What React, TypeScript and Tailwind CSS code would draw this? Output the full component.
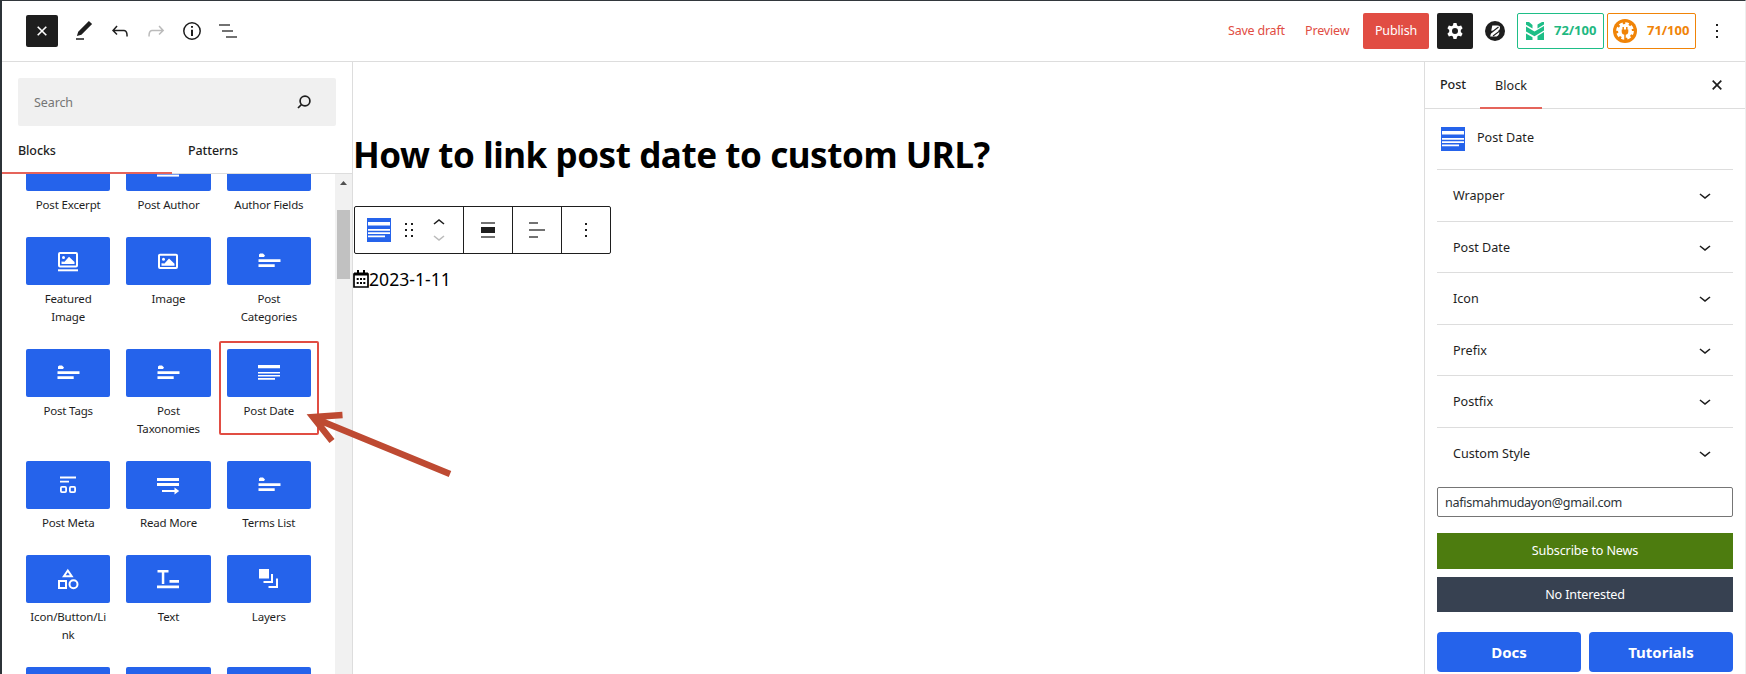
import React from "react";

const PostIcon = ({ size = 24 }: { size?: number }) => (
  <svg width={size} height={size} viewBox="0 0 24 24" className="shrink-0">
    <rect width="24" height="24" fill="#2563eb" />
    <path d="M1 4h22v3.5H1zM1 11h22v1.7H1zM1 14.3h22V16H1zM1 17.5h17v1.7H1z" fill="#fff" />
  </svg>
);

const tileIcons: Record<string, React.ReactNode> = {
  none: null,
  author: <path d="M1 20.6h22" stroke="#fff" strokeWidth="2" />,
  featured: (
    <g fill="none" stroke="#fff">
      <rect x="3" y="4" width="18" height="13.5" rx="1" strokeWidth="2" />
      <path d="M2 21.3h20" strokeWidth="2" />
      <path d="M5.5 15V12.5l3 .3 4.5-5 5.5 5.2v2z" fill="#fff" stroke="none" />
      <circle cx="7.5" cy="8.5" r="1.5" fill="#fff" stroke="none" />
    </g>
  ),
  image: (
    <g fill="none" stroke="#fff">
      <rect x="3" y="5.7" width="18" height="13.3" rx="1" strokeWidth="2" />
      <path d="M5.5 16.7v-2.5l3 .3 4.5-5 5.5 5.2v2z" fill="#fff" stroke="none" />
      <circle cx="7.5" cy="10.2" r="1.5" fill="#fff" stroke="none" />
    </g>
  ),
  terms: <path d="M2 8V5.600L3.200 4.500h2.800l2 2-1 1.500zM1.500 10.300h22v2.800h-22zM1.500 15.300h16.200v2.800H1.500z" fill="#fff" />,
  date: <path d="M1 4h22v3.300H1zM1 11h22v1.600H1zM1 14h22v1.600H1zM1 17h17v1.800H1z" fill="#fff" />,
  meta: (
    <g fill="none" stroke="#fff" strokeWidth="1.8">
      <path d="M4 4.500h16M4 8.700h9" />
      <rect x="4.900" y="13.900" width="5.200" height="5.200" rx="1" />
      <rect x="13.900" y="13.900" width="5.200" height="5.200" rx="1" />
    </g>
  ),
  more: (
    <g fill="#fff">
      <path d="M1 5h22v3H1zM1 10h22v3H1zM6 17h13v2H6z" />
      <path d="M18.500 14.500l4.700 3.500-4.700 3.500z" />
    </g>
  ),
  shapes: (
    <g fill="none" stroke="#fff" strokeWidth="2">
      <path d="M11.800 3.500L7.900 9.200h7.800z" />
      <rect x="3" y="14" width="7" height="7" />
      <circle cx="17.500" cy="17.300" r="4" />
    </g>
  ),
  text: <path d="M1.500 3h11v2.400H8.300V17H5.800V5.400H1.500zM13.500 13H23v2.700h-9.500zM1 18.500h22v2.800H1z" fill="#fff" />,
  layers: <path d="M2 2h10v9.500H2zM14 7h2v9H6.500v-2H14zM19 11.500h2V21h-9.500v-2H19z" fill="#fff" />,
};

const rows: { h: string; items: [string, string][] }[] = [
  { h: "h-[94px]", items: [["Post Excerpt", "none"], ["Post Author", "author"], ["Author Fields", "none"]] },
  { h: "h-[112px]", items: [["Featured Image", "featured"], ["Image", "image"], ["Post Categories", "terms"]] },
  { h: "h-[112px]", items: [["Post Tags", "terms"], ["Post Taxonomies", "terms"], ["Post Date", "date"]] },
  { h: "h-[94px]", items: [["Post Meta", "meta"], ["Read More", "more"], ["Terms List", "terms"]] },
  { h: "h-[112px]", items: [["Icon/Button/Link", "shapes"], ["Text", "text"], ["Layers", "layers"]] },
  { h: "h-[94px]", items: [["", "none"], ["", "none"], ["", "none"]] },
];

function Tile({ label, icon }: { label: string; icon: string }) {
  const active = label === "Post Date";
  return (
    <div
      className={
        "flex h-full flex-col items-center px-2 pt-2 " +
        (active ? "max-h-[94px] rounded-xs outline-2 -outline-offset-2 outline-[#e14d43]" : "")
      }
    >
      <div className="flex h-12 w-full shrink-0 items-center justify-center rounded-xs bg-[#2563eb]">
        <svg width="24" height="24" viewBox="0 0 24 24">{tileIcons[icon]}</svg>
      </div>
      <div className="mt-[5px] w-[77px] text-center text-[11.5px] leading-[18px] tracking-[-0.17px] break-words text-[#1e1e1e]">
        {label}
      </div>
    </div>
  );
}

function Inserter() {
  return (
    <aside className="flex w-[351px] shrink-0 flex-col border-r border-[#ddd]">
      <div className="mx-4 mt-4 flex h-12 shrink-0 items-center justify-between rounded-xs bg-[#f0f0f0] pr-5 pl-4 text-[#757575]">
        <span className="pt-[3px] text-[12.5px] tracking-[-0.1px]">Search</span>
        <svg width="24" height="24" viewBox="0 0 24 24" fill="none" stroke="#1e1e1e" strokeWidth="1.7">
          <circle cx="13" cy="11" r="4.900" />
          <path d="M9.500 14.500L6 18" />
        </svg>
      </div>
      <div className="flex h-12 shrink-0 border-b border-[#ddd] text-[12.5px] tracking-[-0.1px] text-[#1e1e1e]">
        <div className="-mb-px flex w-[170px] items-center border-b-2 border-[#e5645b] pt-[4px] pl-4 font-medium">Blocks</div>
        <div className="flex items-center pt-[3px] pl-4 font-medium">Patterns</div>
      </div>
      <div className="flex min-h-0 flex-1">
        <div className="flex min-w-0 flex-1 flex-col overflow-hidden">
          <div className="-mt-[39px] ml-4 w-[301px]">
            {rows.map((row, i) => (
              <div key={i} className={"grid grid-cols-3 " + row.h}>
                {row.items.map(([label, icon], j) => (
                  <Tile key={j} label={label} icon={icon} />
                ))}
              </div>
            ))}
          </div>
        </div>
        <div className="flex w-[17px] flex-col items-center bg-[#f1f1f1]">
          <svg width="17" height="17" viewBox="0 0 17 17" className="shrink-0">
            <path d="M5 11h7L8.500 7z" fill="#505050" />
          </svg>
          <div className="mt-[19px] h-[69px] w-[13px] bg-[#c1c1c1]" />
        </div>
      </div>
    </aside>
  );
}

function Header() {
  return (
    <header className="flex h-[61px] shrink-0 items-center border-b border-[#ddd]">
      <div className="ml-6 flex size-8 items-center justify-center rounded-xs bg-[#1e1e1e]">
        <svg width="24" height="24" viewBox="0 0 24 24" stroke="#fff" strokeWidth="1.6">
          <path d="M7.700 7.700l8.600 8.600M16.300 7.700l-8.600 8.600" />
        </svg>
      </div>
      <div className="ml-[14px] flex gap-3 text-[#1e1e1e]">
        <svg width="24" height="24" viewBox="0 0 24 24" fill="currentColor">
          <path d="M20.100 5.100L16.900 2 6.200 12.700l-1.300 4.400 4.500-1.300L20.100 5.100zM4 20.800h8v-1.500H4v1.500z" />
        </svg>
        <svg width="24" height="24" viewBox="0 0 24 24" fill="currentColor">
          <path d="M18.300 11.700c-.6-.6-1.400-.9-2.300-.9H6.700l2.900-3.300-1.100-1-4.500 5L8.500 16l1-1-2.700-2.700H16c.5 0 .9.200 1.300.5 1 1 1 3.400 1 4.500v.3h1.500v-.2c0-1.500 0-4.300-1.500-5.700z" />
        </svg>
        <svg width="24" height="24" viewBox="0 0 24 24" fill="#bbb">
          <path d="M15.600 6.500l-1.100 1 2.900 3.300H8c-.9 0-1.700.3-2.300.9-1.400 1.500-1.400 4.200-1.400 5.600v.2h1.500v-.3c0-1.100 0-3.500 1-4.500.3-.3.7-.5 1.300-.5h9.200L14.500 15l1.100 1.100 4.600-4.600-4.600-5z" />
        </svg>
        <svg width="24" height="24" viewBox="0 0 24 24" fill="none" stroke="currentColor" strokeWidth="1.5">
          <circle cx="12" cy="12" r="8.200" />
          <path d="M12 10.700V17M12 7v1.800" strokeWidth="2" />
        </svg>
        <svg width="24" height="24" viewBox="0 0 24 24" stroke="#444" strokeWidth="1.7">
          <path d="M3 6h11M6 12h11M10 18h11" />
        </svg>
      </div>
      <div className="ml-auto flex items-center text-[12.5px] text-[#e14d43]">
        <span className="w-[77px] pt-px tracking-[-0.22px]">Save draft</span>
        <span className="w-[58px] pt-px tracking-[-0.15px]">Preview</span>
        <div className="flex h-9 w-[66px] items-center justify-center rounded-xs bg-[#e14d43] pt-px tracking-[-0.15px] text-white">
          Publish
        </div>
        <div className="ml-2 flex size-9 items-center justify-center rounded-xs bg-[#1e1e1e]">
          <svg width="24" height="24" viewBox="0 0 24 24" fill="#fff" fillRule="evenodd">
            <path d="M10.500 4h3l.6 2.400 1.600.9 2.400-.7 1.500 2.600-1.800 1.700v2.200l1.800 1.700-1.500 2.600-2.400-.7-1.600.9-.6 2.400h-3l-.6-2.400-1.600-.9-2.400.7-1.500-2.600 1.800-1.700v-2.200L4.400 9.200l1.500-2.600 2.400.7 1.600-.9zM12 9a3 3 0 100 6 3 3 0 000-6z" />
          </svg>
        </div>
        <svg width="20" height="20" viewBox="0 0 20 20" className="ml-3">
          <circle cx="10" cy="10" r="10" fill="#1e1e1e" />
          <path
            d="M7.300 4.500h5c2.200 0 3.100 1.300 2.600 2.900-.3 1.100-.9 1.800-1.900 2.300 1.100.5 1.500 1.400 1.200 2.700-.5 2-1.900 3.100-4 3.100H5.200l.9-4 2-1.700H6.200z"
            fill="#fff"
          />
          <path d="M4.500 13l9-7M8 15l7-5.200" stroke="#1e1e1e" strokeWidth="1.100" />
        </svg>
        <div className="ml-3 flex h-9 w-[87px] items-center rounded-xs border border-[#1ebe87] pl-2 text-[13px] font-bold text-[#1fb881]">
          <svg width="18" height="18" viewBox="0 0 18 18" fill="#1ebe87">
            <path d="M0 0h3l3.500 3v3.500L0 2.800zM11.500 2.500L16 0h2v2.500l-6.500 4zM0 4.500l8.500 5L18 4v4.500l-9.500 5.800L0 9.500zM0 11.500l6.500 3.700V18H0zM11.500 14l6.500-4v8h-6.500z" />
          </svg>
          <span className="ml-[10px] tracking-[-0.05px]">72/100</span>
        </div>
        <div className="ml-[3px] flex h-9 w-[89px] items-center rounded-xs border border-[#f08408] pl-[5px] text-[13px] font-bold text-[#f08408]">
          <svg width="24" height="24" viewBox="0 0 24 24">
            <circle cx="12" cy="12" r="12" fill="#f08408" />
            <circle cx="12" cy="12" r="7" fill="#fff" />
            <circle cx="12" cy="12" r="7.600" fill="none" stroke="#fff" strokeWidth="2.500" strokeDasharray="3.600 2.370" />
            <path d="M10.200 8v3M13.800 8v3M12 14v8" stroke="#f08408" strokeWidth="1.500" />
            <path d="M8.700 10.500h6.600v2a3.300 3.300 0 01-6.600 0z" fill="#f08408" />
          </svg>
          <span className="ml-[10px] tracking-[-0.05px]">71/100</span>
        </div>
        <svg width="24" height="24" viewBox="0 0 24 24" className="mr-4 ml-[9px]" fill="#1e1e1e">
          <path d="M11 5h2v2h-2zM11 11h2v2h-2zM11 17h2v2h-2z" />
        </svg>
      </div>
    </header>
  );
}

function Editor() {
  return (
    <main className="flex min-w-0 flex-1 flex-col text-black">
      <h1 className="mt-[68px] h-[50px] text-[35px] leading-[50px] font-bold tracking-[-0.43px] whitespace-nowrap">
        How to link post date to custom URL?
      </h1>
      <div className="mt-[26px] ml-px flex h-12 w-[257px] shrink-0 divide-x divide-[#1e1e1e] rounded-xs border border-[#1e1e1e]">
        <div className="flex w-[109px] items-center pl-3">
          <PostIcon />
          <svg width="12" height="16" viewBox="0 0 12 16" className="ml-[13px]" fill="#1e1e1e">
            <path d="M1 1h2v2H1zM7 1h2v2H7zM1 7h2v2H1zM7 7h2v2H7zM1 13h2v2H1zM7 13h2v2H7z" />
          </svg>
          <svg width="12" height="24" viewBox="0 0 12 24" className="ml-[17px]" fill="none" strokeWidth="1.6">
            <path d="M1 6l5-4 5 4" stroke="#1e1e1e" />
            <path d="M1 18l5 4 5-4" stroke="#bbb" />
          </svg>
        </div>
        <div className="flex w-[49px] items-center justify-center">
          <svg width="24" height="24" viewBox="0 0 24 24">
            <path d="M5 5h14M5 19h14" stroke="#444" strokeWidth="1.7" />
            <path d="M5 9h14v6H5z" fill="#1e1e1e" />
          </svg>
        </div>
        <div className="flex w-[49px] items-center justify-center">
          <svg width="24" height="24" viewBox="0 0 24 24" stroke="#444" strokeWidth="1.7">
            <path d="M4 5h9M4 12h16M4 19h9" />
          </svg>
        </div>
        <div className="flex flex-1 items-center justify-center">
          <svg width="24" height="24" viewBox="0 0 24 24" fill="#1e1e1e">
            <path d="M11 5h2v2h-2zM11 11h2v2h-2zM11 17h2v2h-2z" />
          </svg>
        </div>
      </div>
      <div className="mt-[11px] flex h-[28px] items-center text-[17.6px]">
        <svg width="16" height="18" viewBox="0 0 16 18">
          <path d="M1 4h14v13H1z" fill="none" stroke="#000" strokeWidth="1.7" />
          <path d="M1 2.500h14v3H1zM4 0h2v4H4zM10 0h2v4h-2z" />
          <path d="M3.700 8h2v2h-2zM7 8h2v2H7zM10.300 8h2v2h-2zM3.700 12h2v2h-2zM7 12h2v2H7zM10.300 12h2v2h-2z" />
        </svg>
        <span>2023-1-11</span>
      </div>
    </main>
  );
}

const panels = ["Wrapper", "Post Date", "Icon", "Prefix", "Postfix", "Custom Style"];

function Sidebar() {
  return (
    <aside className="flex w-[321px] shrink-0 flex-col border-l border-[#ddd] text-[12.6px] text-[#1e1e1e]">
      <div className="flex h-[47px] shrink-0 items-center border-b border-[#ddd]">
        <span className="w-[55px] pt-px pl-[15px] font-medium tracking-[-0.1px]">Post</span>
        <span className="-mb-px flex h-[47px] w-[62px] items-center justify-center border-b-2 border-[#e5645b] pt-[3px]">Block</span>
        <svg width="24" height="24" viewBox="0 0 24 24" stroke="currentColor" strokeWidth="1.7" className="mr-4 ml-auto">
          <path d="M7.700 7.700l8.600 8.600M16.300 7.700l-8.600 8.600" />
        </svg>
      </div>
      <div className="flex h-[60px] shrink-0 items-center pl-4">
        <PostIcon />
        <span className="ml-3 pb-px">Post Date</span>
      </div>
      <div className="mr-3 ml-3">
        {panels.map((p) => (
          <div key={p} className="flex h-[51.5px] items-center justify-between border-t border-[#ddd] pr-4 pl-4">
            <span className="pt-[3px]">{p}</span>
            <svg width="24" height="24" viewBox="0 0 24 24" fill="currentColor">
              <path d="M17.500 11.600L12 16l-5.500-4.400.9-1.200L12 14l4.500-3.600 1 1.200z" />
            </svg>
          </div>
        ))}
        <div className="mt-[9px] flex h-[30px] items-center rounded-xs border border-[#757575] pt-[2px] pl-[7px] tracking-[-0.3px] text-[#2c3338]">
          nafismahmudayon@gmail.com
        </div>
        <div className="mt-4 flex h-9 items-center justify-center bg-[#4d7c0f] pt-px tracking-[-0.15px] text-white">Subscribe to News</div>
        <div className="mt-2 flex h-[35px] items-center justify-center bg-[#374151] pt-[2px] tracking-[-0.15px] text-white">No Interested</div>
        <div className="mt-5 grid grid-cols-2 gap-2 text-[15px] font-bold text-white">
          <div className="flex h-10 items-center justify-center rounded bg-[#2563eb] pt-px">Docs</div>
          <div className="flex h-10 items-center justify-center rounded bg-[#2563eb] pt-px">Tutorials</div>
        </div>
      </div>
    </aside>
  );
}

export default function App() {
  return (
    <div className="relative flex h-[674px] w-[1746px] flex-col overflow-hidden border-t border-r border-l-2 border-t-[#32373c] border-r-[#eee] border-l-[#2c3338] bg-white font-['Noto_Sans','Open_Sans',sans-serif]">
      <Header />
      <div className="flex min-h-0 flex-1">
        <Inserter />
        <Editor />
        <Sidebar />
      </div>
      <svg width="150" height="70" viewBox="0 0 150 70" className="absolute top-[409px] left-[301px]" fill="none" stroke="#be4a32" strokeWidth="6.5">
        <path d="M147 64L12 8.500M39.500 5L10 7 29 31" />
      </svg>
    </div>
  );
}
